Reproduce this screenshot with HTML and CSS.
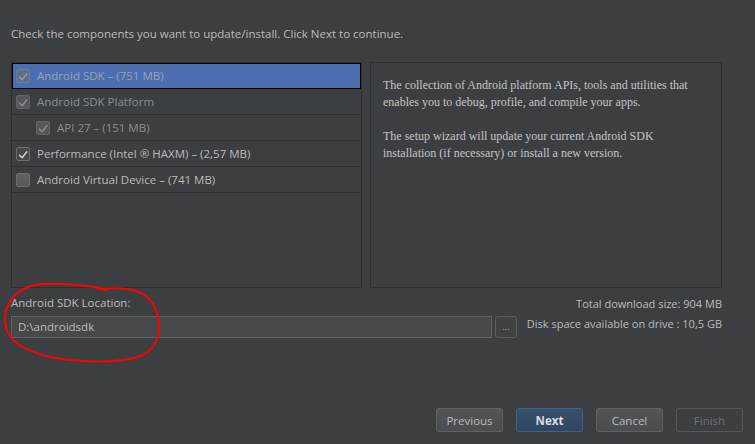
FILE: index.html
```html
<!DOCTYPE html>
<html>
<head>
<meta charset="utf-8">
<link rel="stylesheet" href="styles.css">
</head>
<body>
<div class="page">
  <p class="intro">Check the components you want to update/install. Click Next to continue.</p>
  <div class="panels">
    <ul class="tree">
      <li class="row selected"><span class="cb cb-disabled"><svg viewBox="0 0 14 14"><path d="M3 7.2 L6 10.2 L11.5 3.2"/></svg></span><span class="label">Android SDK – (751 MB)</span></li>
      <li class="row"><span class="cb cb-disabled"><svg viewBox="0 0 14 14"><path d="M3 7.2 L6 10.2 L11.5 3.2"/></svg></span><span class="label dim">Android SDK Platform</span></li>
      <li class="row indent"><span class="cb cb-disabled"><svg viewBox="0 0 14 14"><path d="M3 7.2 L6 10.2 L11.5 3.2"/></svg></span><span class="label dim">API 27 – (151 MB)</span></li>
      <li class="row"><span class="cb cb-on"><svg viewBox="0 0 14 14"><path d="M3 7.2 L6 10.2 L11.5 3.2"/></svg></span><span class="label">Performance (Intel ® HAXM) – (2,57 MB)</span></li>
      <li class="row"><span class="cb cb-off"></span><span class="label">Android Virtual Device – (741 MB)</span></li>
    </ul>
    <div class="desc">
      <p>The collection of Android platform APIs, tools and utilities that enables you to debug, profile, and compile your apps.</p>
      <p>The setup wizard will update your current Android SDK installation (if necessary) or install a new version.</p>
    </div>
  </div>
  <div class="location">
    <div class="loc-left">
      <div class="loc-label">Android SDK Location:</div>
      <div class="path-row">
        <div class="path-input">D:\androidsdk</div>
        <button class="browse">...</button>
      </div>
    </div>
    <div class="sizes">
      <div>Total download size: 904 MB</div>
      <div>Disk space available on drive : 10,5 GB</div>
    </div>
  </div>
  <div class="footer">
    <button class="btn">Previous</button>
    <button class="btn primary">Next</button>
    <button class="btn">Cancel</button>
    <button class="btn disabled">Finish</button>
  </div>
  <svg class="annot" viewBox="0 0 755 444" width="755" height="444">
    <path d="M107 290 C90 285 55 282 35 285 C15 289 4 305 5 322 C6 340 25 352 55 358 C85 363 125 363 143 355 C158 347 161 330 158 318 C155 303 148 294 133 290 C120 287 108 288 98 289"/>
  </svg>
</div>
</body>
</html>
```

FILE: styles.css
```css
* { box-sizing: border-box; }
html, body { margin: 0; padding: 0; }
body {
  background: #3c3f41;
  font-family: "Open Sans", "Noto Sans", sans-serif;
  font-size: 11.5px;
  color: #bbbbbb;
}
.page {
  position: relative;
  width: 755px;
  height: 444px;
  display: flex;
  flex-direction: column;
  padding: 26px 33px 12px 11px;
}
.intro {
  margin: 0;
  line-height: 16px;
  height: 16px;
}
.panels {
  margin-top: 20px;
  display: flex;
  gap: 8px;
  height: 226px;
}
.tree {
  list-style: none;
  margin: 0;
  padding: 0;
  width: 351px;
  border: 1px solid #2d3032;
}
.row {
  height: 26px;
  display: flex;
  align-items: center;
  padding-left: 4px;
  border-bottom: 1px solid #2d3032;
}
.row.selected {
  background: #4b6eaf;
  border: 1px solid #000;
  height: 26px;
  padding-left: 3px;
}
.row.indent { padding-left: 24px; }
.cb {
  width: 14px;
  height: 14px;
  border-radius: 2px;
  margin-right: 7px;
  display: inline-flex;
  flex-shrink: 0;
}
.cb svg { width: 14px; height: 14px; }
.cb path { fill: none; stroke-width: 1.8; stroke-linecap: round; stroke-linejoin: round; }
.cb-disabled { background: #55585a; border: 1px solid #626466; }
.cb-disabled path { stroke: #8a8c8e; }
.selected .cb-disabled { background: #5d6f8e; border-color: #6d7d99; }
.selected .cb-disabled path { stroke: #8e98aa; }
.cb-on { background: #45494b; border: 1px solid #6b6d6f; }
.cb-on path { stroke: #d0d0d0; }
.cb-off { background: linear-gradient(#606365, #55585a); border: 1px solid #6b6d6f; }
.label { white-space: nowrap; line-height: 16px; }
.label.dim { color: #8c8c8c; }
.selected .label { color: #97a3b8; }
.desc {
  flex: 1;
  border: 1px solid #2d3032;
  padding: 14px 12px;
  font-family: "Liberation Serif", "Times New Roman", serif;
  font-size: 12px;
  line-height: 17px;
  color: #c4c4c4;
}
.desc p { margin: 0 0 17px 0; }
.location {
  margin-top: 7px;
  display: flex;
  justify-content: space-between;
}
.loc-label { line-height: 16px; }
.path-row {
  margin-top: 5px;
  display: flex;
  gap: 3px;
}
.path-input {
  width: 481px;
  height: 22px;
  background: #45494a;
  border: 1px solid #5f6263;
  padding: 0 6px;
  line-height: 20px;
  color: #bbbbbb;
}
.browse {
  width: 22px;
  height: 22px;
  padding: 0;
  background: #3e4244;
  border: 1px solid #5c5f61;
  border-radius: 3px;
  color: #bbbbbb;
  font-family: inherit;
  font-size: 9px;
  line-height: 18px;
}
.sizes {
  text-align: right;
  font-size: 11px;
  line-height: 20px;
  margin-top: -1px;
}
.footer {
  margin-top: auto;
  margin-right: -21px;
  display: flex;
  justify-content: flex-end;
  gap: 13px;
}
.btn {
  width: 67px;
  height: 24px;
  padding: 0;
  border-radius: 3px;
  border: 1px solid #5e6263;
  background: linear-gradient(#515557, #4a4e50);
  color: #bbbbbb;
  font-family: inherit;
  font-size: 11.5px;
}
.btn.primary {
  background: linear-gradient(#37506f, #2f4563);
  border-color: #4a5f7a;
  color: #dddddd;
  font-weight: bold;
}
.btn.disabled {
  background: #3c3f41;
  border-color: #55585a;
  color: #6f7173;
}
.annot {
  position: absolute;
  left: 0;
  top: 0;
  pointer-events: none;
}
.annot path {
  fill: none;
  stroke: #ff0000;
  stroke-width: 2;
  stroke-linecap: round;
}
```
